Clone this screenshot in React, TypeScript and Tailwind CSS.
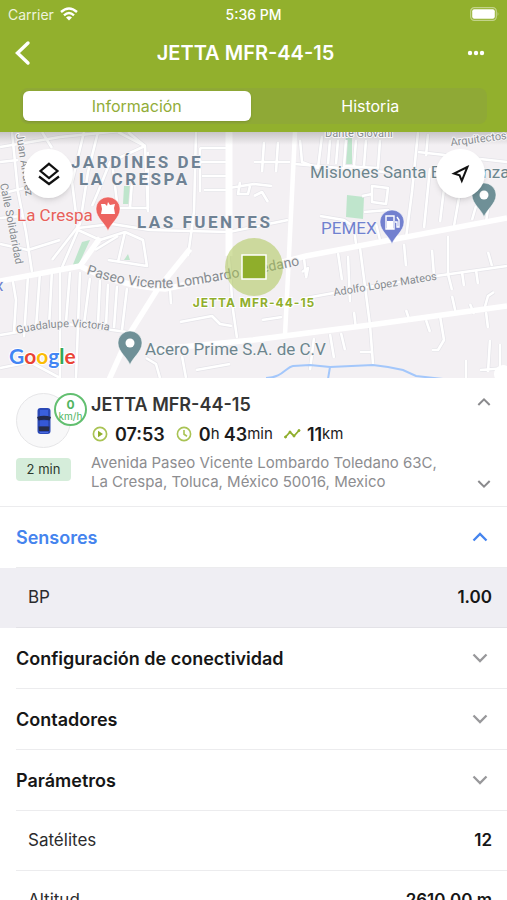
import type { ReactNode } from "react";
import { useState } from "react";

const streets = [
  "M0 15 60 5 130 -2",
  "M12 0 18 60 26 100 32 140",
  "M0 62 40 52 70 48",
  "M0 112 28 118 60 108",
  "M42 0 52 16",
  "M84 0 72 50 78 98 60 140",
  "M98 0 88 40 80 92 52 128",
  "M118 0 145 14 148 80",
  "M145 14 110 30 98 60 92 74",
  "M145 14 128 0",
  "M112 76 148 76 148 20",
  "M132 50 130 76",
  "M112 30 118 78",
  "M78 96 112 92 150 98 229 100",
  "M78 98 100 108 125 100 143 108 147 134 108 128",
  "M95 118 118 104",
  "M125 100 118 130",
  "M196 0 194 80 188 124",
  "M200 16 229 16M200 30 229 30M202 44 229 44M204 58 229 58",
  "M200 16 200 60",
  "M229 56 254 52M240 50 238 62 248 62 250 54M254 64 262 60 268 70M254 52 272 54",
  "M229 100 288 88",
  "M0 30 18 28M0 86 22 84",
  "M12 144 16 168 14 200",
  "M28 144 24 205M40 140 36 196M52 138 49 195M60 136 60 246M70 140 66 190M80 140 76 246M90 146 84 192M100 148 98 192M108 152 106 194M117 154 114 196M127 156 122 198",
  "M0 203 67 192 127 200",
  "M0 236 30 230 60 246",
  "M170 157 171 172",
  "M229 0 229 128 233 178 237 206",
  "M180 190 212 184 220 192 232 194",
  "M146 226 156 232 160 246M182 224 186 246M196 238 230 232",
  "M300 8 302 30 318 36 322 4M330 8 328 32M338 8 336 32M346 8 344 34 378 36 380 8M356 8 354 34M366 8 364 34",
  "M264 10 262 40M278 10 276 40M254 30 290 30",
  "M295 32 408 42",
  "M418 0 412 60 406 106",
  "M418 20 507 30M428 2 426 24M446 40 440 90M460 60 454 94M476 74 472 88M490 64 486 90M430 36 424 96",
  "M372 54 388 56 386 72 372 70ZM362 64 372 62M364 80 388 78 396 90M354 96 356 112M376 92 380 108",
  "M320 84 344 88 356 96",
  "M338 121 342 148M348 124 350 170M304 126 306 144M404 112 406 134M432 118 434 144M448 104 448 142",
  "M302 140 308 136 306 146",
  "M306 166 350 158 436 144 507 134",
  "M448 142 452 158M462 140 464 154M476 138 478 152M492 134 488 120",
  "M360 116 370 193 373 232",
  "M262 188 282 185M314 206 310 238M330 202 334 226M341 201 345 218M354 180 356 197M360 220 372 220",
  "M406 178 410 190M426 188 430 200M440 184 444 208 438 218 432 218M452 164 456 182M470 172 474 182M484 178 488 164 494 160M486 180 488 196",
  "M466 228 466 246M490 208 488 240M500 212 500 234M480 238 507 236",
];

const mains = [
  "M0 149 80 134Q118 154 165 157L240 141 306 124 507 86",
  "M190 117 157 158 130 201 108 250",
  "M80 134 100 106",
  "M150 218 253 208 370 193 507 174",
];

function Pin({ x, y, color, children }: { x: number; y: number; color: string; children: ReactNode }) {
  return (
    <g transform={`translate(${x} ${y})`}>
      <path d="M0 0C-2 -7 -12 -13 -12 -22A12 12 0 0 1 12 -22C12 -13 2 -7 0 0Z" fill={color} stroke="#fff" strokeOpacity=".5" />
      {children}
    </g>
  );
}

function CityMap() {
  return (
    <svg viewBox="0 0 507 246" preserveAspectRatio="xMidYMid slice" className="block h-full w-full" role="img" aria-label="Mapa">
      <defs>
        <path id="paseo" d="M86 142Q128 156 165 156Q200 154 310 131" />
        <path id="guadalupe" d="M17 202Q66 189 120 201" />
        <linearGradient id="shade" x1="0" y1="0" x2="0" y2="1">
          <stop offset="0" stopColor="#555" stopOpacity=".28" />
          <stop offset="1" stopColor="#555" stopOpacity="0" />
        </linearGradient>
      </defs>
      <rect x="-300" width="1107" height="246" fill="#f3f0f3" />
      <g fill="#bfe5cc">
        <path d="M124 54h6v18h-7zM346 2h6v30h-7zM347 63l17 2-1 22-17-2zM82 110l8-2-12 26-6 1zM124 128l4-6 2 6z" />
      </g>
      <g fill="none" stroke="#e5e4e9" strokeWidth="4" strokeLinejoin="round">
        {streets.map((d) => <path key={d} d={d} />)}
      </g>
      <g fill="none" stroke="#fff" strokeWidth="2.6" strokeLinejoin="round">
        {streets.map((d) => <path key={d} d={d} />)}
      </g>
      <g fill="none" stroke="#fff" strokeLinejoin="round">
        {mains.map((d) => <path key={d} d={d} strokeWidth="5.5" />)}
        <path d="M229 0V124" strokeWidth="7" />
        <path d="M295 0 289 123 285 203" strokeWidth="4.5" />
      </g>
      <path d="M266 246C282 246 286 235 293 234L310 233 330 235 373 233 388 235 403 238 416 244 443 247M330 235 328 247" fill="none" stroke="#a3c7fb" strokeWidth="2" />
      <circle cx="503" cy="242" r="9" fill="#fff" />
      <rect x="-300" width="1107" height="13" fill="url(#shade)" />

      <g className="font-[Roboto,sans-serif]" stroke="#f6f4f6" strokeWidth="2" paintOrder="stroke" strokeLinejoin="round">
        <g fill="#6f8294" className="text-[17px] font-bold tracking-[2.5px]">
          <text x="71" y="36">JARDÍNES DE</text>
          <text x="79" y="53">LA CRESPA</text>
          <text x="137" y="96">LAS FUENTES</text>
        </g>
        <g fill="#868b90" className="text-[11px]">
          <text className="text-[14px]"><textPath href="#paseo">Paseo Vicente Lombardo Toledano</textPath></text>
          <text><textPath href="#guadalupe">Guadalupe Victoria</textPath></text>
          <text transform="translate(334 164) rotate(-9)">Adolfo López Mateos</text>
          <text transform="translate(451 14) rotate(-7)">Arquitectos</text>
          <text x="325" y="5">Dante Giovani</text>
          <text transform="translate(16 2) rotate(81)">Juan Álvarez</text>
          <text transform="translate(0 52) rotate(79)">Calle Solidaridad</text>
        </g>
        <g className="text-[17px]">
          <text x="17" y="89" fill="#e8605a">La Crespa</text>
          <text x="310" y="46" fill="#6c858d">Misiones Santa Esperanza</text>
          <text x="321" y="102" fill="#7081cf">PEMEX</text>
          <text x="145" y="223" fill="#6c858d">Acero Prime S.A. de C.V</text>
          <text x="-5" y="159" fill="#7081cf">x</text>
        </g>
      </g>

      <Pin x={108} y={99} color="#ed6460">
        <path d="M-7 -27h4l2 2 1-4 2 3 5-1-1 4 1 6h-14l1-5z" fill="#fff" />
      </Pin>
      <Pin x={392} y={112} color="#7280cf">
        <path d="M-6 -28h8v13h-8zM3 -22h2v5h2v-7l-2-3" fill="none" stroke="#fff" strokeWidth="1.4" />
        <path d="M-5 -23h6v8h-6z" fill="#fff" />
      </Pin>
      <Pin x={484} y={85} color="#6f9097"><circle cy="-22" r="4.5" fill="#fff" /></Pin>
      <Pin x={130} y={233} color="#6f9097"><circle cy="-22" r="4.5" fill="#fff" /></Pin>

      <circle cx="254" cy="135" r="29" fill="#a9c34f" fillOpacity=".52" />
      <rect x="242" y="123" width="24" height="24" fill="#8fae2b" stroke="#fff" strokeWidth="1.5" />
      <text x="254" y="175" textAnchor="middle" fill="#90ae2c" stroke="#fff" strokeWidth="2" paintOrder="stroke" className="font-[Inter,sans-serif] text-[12px] font-bold tracking-[1px]">JETTA MFR-44-15</text>

      <text x="9" y="232" stroke="#fff" strokeWidth="2" paintOrder="stroke" className="font-[Lato,sans-serif] text-[21px] font-bold">
        <tspan fill="#4285f4">G</tspan><tspan fill="#ea4335">o</tspan><tspan fill="#fbbc05">o</tspan><tspan fill="#4285f4">g</tspan><tspan fill="#34a853">l</tspan><tspan fill="#ea4335">e</tspan>
      </text>
    </svg>
  );
}

function Chevron({ up = false, small = false }: { up?: boolean; small?: boolean }) {
  return (
    <svg viewBox="0 0 16 16" className={small ? "size-[14px]" : "size-4"} fill="none" stroke="currentColor" strokeWidth="2.3" aria-hidden="true">
      <path d={up ? "M1.5 11.5 8 5l6.5 6.5" : "M1.5 4.5 8 11l6.5-6.5"} />
    </svg>
  );
}

function SectionRow({ label, open = false }: { label: string; open?: boolean }) {
  return (
    <div className="pl-4">
      <button
        type="button"
        aria-expanded={open}
        className={`flex h-[61px] w-full items-center justify-between border-b border-[#ececee] pr-[19px] text-left text-[18px] font-semibold ${open ? "text-[#4584ee]" : "text-[#161616]"}`}
      >
        {label}
        <span className={open ? "text-[#4584ee]" : "text-[#98989b]"}><Chevron up={open} /></span>
      </button>
    </div>
  );
}

function ValueRow({ label, value, shaded = false }: { label: string; value: string; shaded?: boolean }) {
  return (
    <dl className={`pl-4 ${shaded ? "bg-[#efeef3]" : ""}`}>
      <div className={`flex h-[60px] items-center justify-between border-b pt-px pr-[15px] pl-3 ${shaded ? "border-[#e3e2e7]" : "border-[#ececee]"}`}>
        <dt className="text-[17px] text-[#2b2b2d]">{label}</dt>
        <dd className="text-[17px] font-semibold text-[#161616]">{value}</dd>
      </div>
    </dl>
  );
}

export default function App() {
  const [tab, setTab] = useState("Información");
  return (
    <div className="flex h-screen flex-col overflow-hidden bg-white font-[Inter,sans-serif]">
      <header className="shrink-0 bg-[#92b02d] pb-2 text-white">
        <div className="grid h-7 grid-cols-3 items-center px-2 text-[14px]">
          <span className="flex items-center gap-[6px] text-[#eef3dc]">
            Carrier
            <svg viewBox="0 0 18 14" className="h-[14px] w-[18px]" fill="none" stroke="#fff" strokeWidth="2.4" aria-hidden="true">
              <path d="M1 5Q9-2 17 5M4 8.3Q9 3.8 14 8.3" />
              <path d="M6 10.5Q9 8 12 10.5L9 13.5Z" fill="#fff" stroke="none" />
            </svg>
          </span>
          <span className="text-center font-medium">5:36 PM</span>
          <svg viewBox="0 0 30 14" className="h-[14px] w-[30px] justify-self-end" aria-label="Batería">
            <rect x="1.7" y=".7" width="25.6" height="12.6" rx="3.6" fill="none" stroke="#c3d38a" strokeWidth="1.2" />
            <rect x="3.2" y="2.2" width="22.6" height="9.6" rx="2" fill="#fff" />
            <path d="M28.6 5v4q1.6-2 0-4" fill="#c3d38a" />
          </svg>
        </div>
        <div className="grid h-[50px] grid-cols-[32px_1fr_48px] items-center px-[7px]">
          <button type="button" aria-label="Atrás" className="flex h-8 items-center pl-[7px]">
            <svg viewBox="0 0 18 26" className="h-[26px] w-[18px]" fill="none" stroke="#fff" strokeWidth="3.4" strokeLinecap="round"><path d="M14 3 3.5 13 14 23" /></svg>
          </button>
          <h1 className="text-center text-[20px] font-semibold">JETTA MFR-44-15</h1>
          <button type="button" aria-label="Más opciones" className="flex h-8 items-center justify-center">
            <svg viewBox="0 0 18 6" className="h-[6px] w-[18px]" fill="#fff"><circle cx="3" cy="3" r="2.2" /><circle cx="9" cy="3" r="2.2" /><circle cx="15" cy="3" r="2.2" /></svg>
          </button>
        </div>
        <div className="px-5 pt-[10px]">
          <div className="grid grid-cols-2 gap-[6px] rounded-lg bg-[#8fa936] p-[3px]" role="tablist">
            {["Información", "Historia"].map((name) => (
              <button
                key={name}
                type="button"
                role="tab"
                aria-selected={tab === name}
                onClick={() => setTab(name)}
                className={`h-[30px] rounded-md text-[16px] ${tab === name ? "bg-white text-[#92ad38] shadow" : "text-white"}`}
              >
                {name}
              </button>
            ))}
          </div>
        </div>
      </header>

      <section className="relative h-[246px] shrink-0 overflow-hidden">
        <CityMap />
        <button type="button" aria-label="Capas" className="absolute top-[17px] left-6 flex size-[49px] items-center justify-center rounded-full bg-white shadow-md">
          <svg viewBox="0 0 24 24" className="size-6" fill="none" stroke="#111" strokeWidth="2.2">
            <path d="M12 1.8 20.5 9 12 16 3.5 9Z" /><path d="M2 14.5 12 22 22 14.5" />
          </svg>
        </button>
        <button type="button" aria-label="Centrar" className="absolute top-[17px] right-[22px] flex size-[49px] items-center justify-center rounded-full bg-white shadow-md">
          <svg viewBox="0 0 24 24" className="size-6" fill="none" stroke="#111" strokeWidth="2"><path d="M18.4 5 5 11.5 10.6 13.4 12.8 18.8Z" /></svg>
        </button>
      </section>

      <section className="flex h-[129px] shrink-0 border-b border-[#ececee] pt-[15px] pr-4 pl-4">
        <div className="w-[75px] shrink-0">
          <div className="relative flex size-[55px] items-center justify-center rounded-full border border-[#e6e6e8] bg-[#f8f8f9]">
            <svg viewBox="0 0 14 28" className="h-7 w-[14px]" aria-label="Auto">
              <rect x=".5" y="1" width="13" height="26" rx="3" fill="#2b49b6" />
              <path d="M3 3h8v6H3z" fill="#3a5fdc" />
              <path d="M0 10Q7 7.500 14 10l-1.500 3.500Q7 12 1.500 13.500z" fill="#22294a" />
              <rect x="3" y="13.5" width="8" height="5.500" fill="#3558d8" />
              <path d="M1.500 19.500h11l-.5 4.500h-10z" fill="#272d48" />
              <path d="M3 25.500h8" stroke="#4a6ae0" strokeWidth="1.2" />
            </svg>
            <div className="absolute -top-px left-[37px] flex size-[33px] flex-col items-center justify-center rounded-full border-2 border-[#62bf70] bg-white text-[#50b560]">
              <span className="text-[12px] leading-[12px] font-bold">0</span>
              <span className="text-[10px] leading-[10px]">km/h</span>
            </div>
          </div>
          <div className="mt-[10px] flex h-[23px] w-[55px] items-center justify-center rounded bg-[#d5edda] text-[13px] text-[#2c3a2f]">2 min</div>
        </div>
        <div className="min-w-0 flex-1">
          <h2 className="text-[18px] leading-[23px] font-semibold text-[#353535]">JETTA MFR-44-15</h2>
          <div className="mt-[5px] flex h-[26px] items-center text-[15px] text-[#1b1b1b]">
            <svg viewBox="0 0 18 18" className="mr-[6px] size-[18px]" aria-hidden="true"><circle cx="9" cy="9" r="6.6" fill="none" stroke="#a9c354" strokeWidth="1.7" /><path d="M7 5.8v6.4L12 9z" fill="#8fae2b" /></svg>
            <strong className="text-[18px] font-semibold">07:53</strong>
            <svg viewBox="0 0 18 18" className="mr-[6px] ml-[10px] size-[18px]" fill="none" stroke="#a9c354" strokeWidth="1.6" aria-hidden="true"><circle cx="9" cy="9" r="6.6" /><path d="M9 5v4.3l3 1.9" /></svg>
            <strong className="text-[18px] font-semibold">0</strong>h&nbsp;<strong className="text-[18px] font-semibold">43</strong>min
            <svg viewBox="0 0 18 18" className="mr-[6px] ml-[10px] size-[18px]" fill="#8fae2b" stroke="#8fae2b" aria-hidden="true"><path d="M2.5 12 7 7l4 4 5-5.500" fill="none" strokeWidth="1.8" /><circle cx="2.5" cy="12" r="1" /><circle cx="7" cy="7" r="1" /><circle cx="11" cy="11" r="1" /><circle cx="16" cy="5.5" r="1" /></svg>
            <strong className="text-[18px] font-semibold">11</strong>km
          </div>
          <p className="mt-[6px] max-w-[365px] text-[15px] leading-[19px] text-[#8d8d90]">
            Avenida Paseo Vicente Lombardo Toledano 63C, La Crespa, Toluca, México 50016, Mexico
          </p>
        </div>
        <div className="flex w-[14px] shrink-0 flex-col justify-between pt-[2px] pb-[15px] text-[#8a8a8d]">
          <button type="button" aria-label="Anterior"><Chevron up small /></button>
          <button type="button" aria-label="Siguiente"><Chevron small /></button>
        </div>
      </section>

      <main className="min-h-0 flex-1 overflow-y-auto [scrollbar-width:none]">
        <SectionRow label="Sensores" open />
        <ValueRow label="BP" value="1.00" shaded />
        <SectionRow label="Configuración de conectividad" />
        <SectionRow label="Contadores" />
        <SectionRow label="Parámetros" />
        <ValueRow label="Satélites" value="12" />
        <ValueRow label="Altitud" value="2610.00 m" />
      </main>
    </div>
  );
}
